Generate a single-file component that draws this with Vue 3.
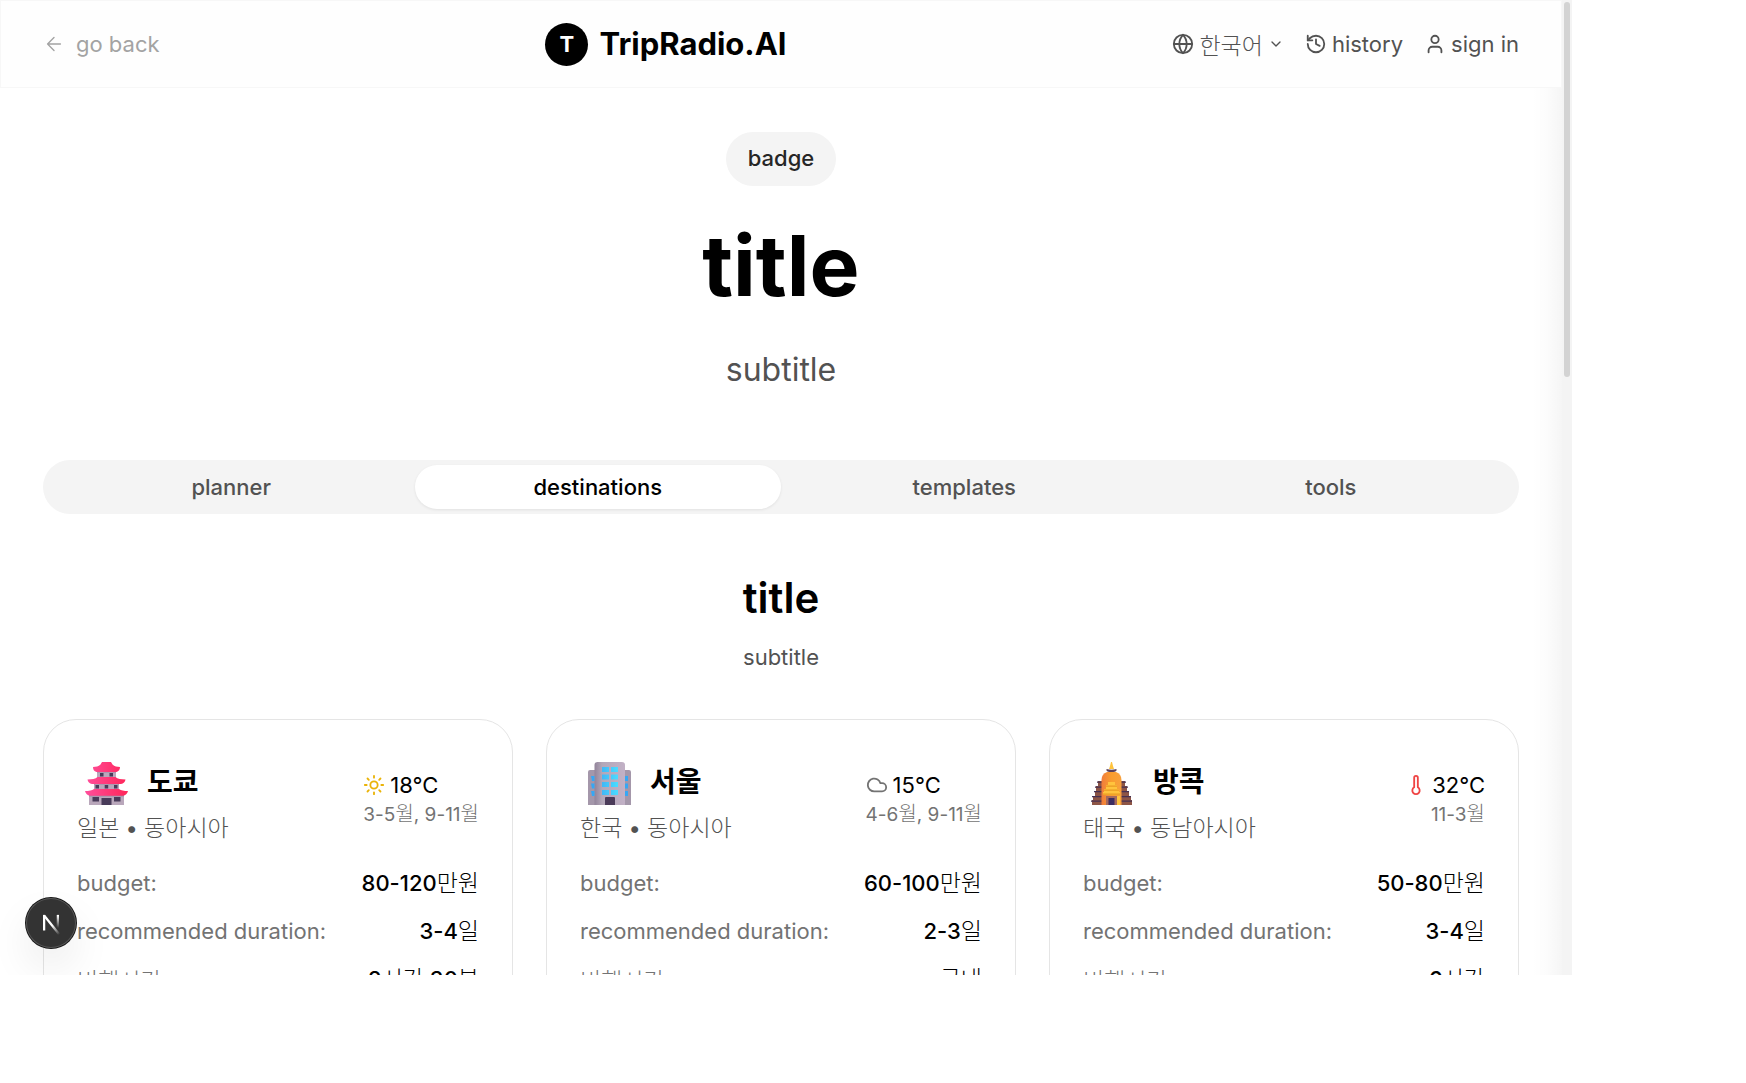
<script setup>
import { ref } from 'vue'

const tabs = ['planner', 'destinations', 'templates', 'tools']
const active = ref('destinations')

const destinations = [
  {
    id: 'tokyo', city: '도쿄', country: '일본', area: '동아시아', weather: 'sun', temp: '18°C',
    season: [['3-5', '월'], [', 9-11', '월']],
    budget: [['80-120', '만원']], days: [['3-4', '일']], flight: [['2', '시간'], [' 30', '분']],
  },
  {
    id: 'seoul', city: '서울', country: '한국', area: '동아시아', weather: 'cloud', temp: '15°C',
    season: [['4-6', '월'], [', 9-11', '월']],
    budget: [['60-100', '만원']], days: [['2-3', '일']], flight: [['', '국내']],
  },
  {
    id: 'bangkok', city: '방콕', country: '태국', area: '동남아시아', weather: 'hot', temp: '32°C',
    season: [['11-3', '월']],
    budget: [['50-80', '만원']], days: [['3-4', '일']], flight: [['6', '시간']],
  },
]
</script>

<template>
  <div class="frame">
    <div class="page">
      <header class="topbar">
        <button class="link back" type="button">
          <svg class="icon thin" viewBox="0 0 24 24"><path d="m12 19-7-7 7-7M19 12H5" /></svg>
          <span>go back</span>
        </button>
        <a class="brand" href="#"><span class="mark">T</span><span>TripRadio.AI</span></a>
        <nav class="actions">
          <button class="link" type="button">
            <svg class="icon" viewBox="0 0 24 24"><circle cx="12" cy="12" r="10" /><path d="M12 2a14.5 14.5 0 0 0 0 20 14.5 14.5 0 0 0 0-20M2 12h20" /></svg>
            <span class="ko">한국어</span>
            <svg class="icon small" viewBox="0 0 24 24"><path d="m6 9 6 6 6-6" /></svg>
          </button>
          <a class="link" href="#">
            <svg class="icon" viewBox="0 0 24 24"><path d="M3 12a9 9 0 1 0 9-9 9.75 9.75 0 0 0-6.74 2.74L3 8" /><path d="M3 3v5h5M12 7v5l4 2" /></svg>
            <span>history</span>
          </a>
          <a class="link" href="#">
            <svg class="icon" viewBox="0 0 24 24"><path d="M19 21v-2a4 4 0 0 0-4-4H9a4 4 0 0 0-4 4v2" /><circle cx="12" cy="7" r="4" /></svg>
            <span>sign in</span>
          </a>
        </nav>
      </header>

      <main class="content">
        <section class="hero">
          <span class="badge">badge</span>
          <h1>title</h1>
          <p>subtitle</p>
        </section>

        <div class="tabs" role="tablist">
          <button
            v-for="tab in tabs" :key="tab" type="button" role="tab"
            :class="{ active: tab === active }" :aria-selected="tab === active" @click="active = tab"
          >{{ tab }}</button>
        </div>

        <section class="intro">
          <h2>title</h2>
          <p>subtitle</p>
        </section>

        <section class="cards">
          <article v-for="d in destinations" :key="d.id" class="card">
            <div class="head">
              <div>
                <div class="name">
                  <svg v-if="d.id === 'tokyo'" class="picture" viewBox="0 0 43 43">
                    <defs><linearGradient id="roof"><stop offset="0" stop-color="#ff4f9c" /><stop offset="1" stop-color="#ff2558" /></linearGradient></defs>
                    <path fill="#b9a7bb" d="M12 9h19v7H12zM9 20h25v8H9zM4 32h35v11H4z" />
                    <path fill="#9c8ba3" d="M12 9h19v1.500H12zM9 21h25v1.500H9zM4 33h35v1.500H4z" />
                    <path fill="url(#roof)" d="M17 0h9l1.500 2.500c2 1.800 4.500 2.500 7.500 2.500 0 2.500-1.200 4.500-3.500 5h-20C9 9.500 8 7.500 8 5c3 0 5.500-.7 7.500-2.500zM12.500 15h18c2 1.800 5.500 2.500 10 2.500-.4 2.700-2 4-4.500 4.500H7c-2.500-.5-4.100-1.800-4.500-4.500 4.500 0 8-.7 10-2.500zM9 27h25c2 1.400 5 2 9 2-.6 2.700-2.500 4.300-5 4.800H5c-2.500-.5-4.400-2.100-5-4.800 4 0 7-.6 9-2z" />
                    <path fill="#483b59" d="M15 11h3.500v3.500H15zM24.500 11H28v3.500h-3.500zM10.500 23H14v3.500h-3.500zM19.700 23h3.500v3.500h-3.500zM29 23h3.500v3.500H29zM7.500 35H14v4.500H7.500zM29 35h6.500v4.500H29zM16.500 36h10v7h-10z" />
                  </svg>
                  <svg v-else-if="d.id === 'seoul'" class="picture" viewBox="0 0 43 43">
                    <defs>
                      <linearGradient id="tower"><stop offset="0" stop-color="#92849a" /><stop offset=".25" stop-color="#b3a7b8" /><stop offset="1" stop-color="#c2b1c6" /></linearGradient>
                      <linearGradient id="glass"><stop offset="0" stop-color="#42b7f5" /><stop offset="1" stop-color="#4bdcff" /></linearGradient>
                    </defs>
                    <path fill="#a497aa" d="M0 10q0-2 2-2h7v35H0zM34 8h7q2 0 2 2v33h-9z" />
                    <path fill="url(#tower)" d="M6.500 3q0-3 3-3h24.500q3 0 3 3v40H6.500z" />
                    <path fill="url(#glass)" d="M14 5h7v5h-7zM23 5h7v5h-7zM14 12.500h7v5h-7zM23 12.500h7v5h-7zM14 20h7v5h-7zM23 20h7v5h-7zM14 28h7v5h-7zM23 28h7v5h-7z" />
                    <path fill="#36a7f4" d="M3 14h3.500v5H4zM3 21.500h3.500v5H4zM3 29h3.500v5H4zM37 14h3v5h-3zM37 21.500h3v5h-3zM37 29h3v5h-3z" />
                    <path fill="#4b3b59" d="M17 43v-7q0-1 1-1h8q1 0 1 1v7z" />
                  </svg>
                  <svg v-else class="picture" viewBox="0 0 43 43">
                    <defs><linearGradient id="stupa"><stop offset="0" stop-color="#f07c3c" /><stop offset=".5" stop-color="#f99d2e" /><stop offset="1" stop-color="#f8a13d" /></linearGradient></defs>
                    <path fill="#8d5546" d="M7 19h27v5h2v5h2v5h2v4h1v5H1v-5h1v-4h2v-5h1v-5h2z" />
                    <path fill="#453052" d="M6 19.500h29v1.300H6zM4 24.500h33v1.300H4zM3 29h35v1.300H3zM1 34h39v1.300H1zM0 38.500h41v1.300H0z" />
                    <path fill="url(#stupa)" d="M10.500 43V18q0-6 5.500-8h9q5.500 2 5.500 8v25z" />
                    <path fill="#ffc33d" d="M19 4 20 0h1l1 4 1 3h-5zM17 20h7v3h2v4h2v3h1v3H12v-3h1v-3h2v-4h2zM26 34h3v9h-3z" />
                    <path fill="#e99a22" d="M15 23.500h11v1.300H15zM13 27.500h15v1.300H13zM12 31.500h17v1.300H12z" />
                    <path fill="#59405b" d="M15.500 7q5 1.500 10 0v1.500q-1 1.500-5 1.500t-5-1.500z" />
                    <path fill="#a5695c" d="M15 34h11v9H15z" /><path fill="#3c2d61" d="M17.500 36h6v7h-6z" />
                  </svg>
                  <h3>{{ d.city }}</h3>
                </div>
                <p class="region"><span class="ko">{{ d.country }}</span> • <span class="ko">{{ d.area }}</span></p>
              </div>
              <div class="climate">
                <div class="temp">
                  <svg class="icon" :class="d.weather" viewBox="0 0 24 24">
                    <template v-if="d.weather === 'sun'"><circle cx="12" cy="12" r="4" /><path d="M12 2v2M12 20v2M4.930 4.930l1.410 1.410M17.660 17.660l1.410 1.410M2 12h2M20 12h2M6.340 17.660l-1.410 1.410M19.070 4.930l-1.410 1.410" /></template>
                    <path v-else-if="d.weather === 'cloud'" d="M17.500 19H9a7 7 0 1 1 6.710-9h1.790a4.500 4.500 0 1 1 0 9Z" />
                    <path v-else d="M14 4v10.540a4 4 0 1 1-4 0V4a2 2 0 0 1 4 0Z" />
                  </svg>
                  <span>{{ d.temp }}</span>
                </div>
                <p class="season"><template v-for="(s, i) in d.season" :key="i">{{ s[0] }}<span class="ko">{{ s[1] }}</span></template></p>
              </div>
            </div>
            <dl>
              <div><dt>budget:</dt><dd><template v-for="(s, i) in d.budget" :key="i">{{ s[0] }}<span class="ko">{{ s[1] }}</span></template></dd></div>
              <div><dt>recommended duration:</dt><dd><template v-for="(s, i) in d.days" :key="i">{{ s[0] }}<span class="ko">{{ s[1] }}</span></template></dd></div>
              <div><dt class="ko">비행시간</dt><dd><template v-for="(s, i) in d.flight" :key="i">{{ s[0] }}<span class="ko">{{ s[1] }}</span></template></dd></div>
            </dl>
          </article>
        </section>
      </main>
      <div class="edge"></div>
    </div>
    <div class="track"><div class="thumb"></div></div>
    <button class="dev" type="button" aria-label="Developer tools">
      <svg viewBox="0 0 40 40">
        <defs>
          <linearGradient id="diag" x1="21" y1="22" x2="27" y2="29" gradientUnits="userSpaceOnUse"><stop stop-color="#fff" /><stop offset="1" stop-color="#fff" stop-opacity="0" /></linearGradient>
          <linearGradient id="stem" x1="0" y1="14" x2="0" y2="24" gradientUnits="userSpaceOnUse"><stop stop-color="#fff" /><stop offset="1" stop-color="#fff" stop-opacity="0" /></linearGradient>
        </defs>
        <path d="M14.500 14 26.500 29" fill="none" stroke="url(#diag)" stroke-width="1.800" />
        <path d="M14.500 13.500V26" stroke="#fff" stroke-width="1.800" />
        <path d="M24.600 13.500h1.800v11h-1.800z" fill="url(#stem)" />
      </svg>
    </button>
  </div>
</template>

<style>
body { margin: 0; background: #fff; }
</style>

<style scoped>
* { box-sizing: border-box; }
h1, h2, h3, p, dl, dd { margin: 0; }
button { border: 0; background: none; padding: 0; font: inherit; color: inherit; cursor: pointer; }
a { color: inherit; text-decoration: none; }

.frame {
  position: relative;
  display: flex;
  width: calc(100vw - 174px);
  height: calc(100vh - 108px);
  overflow: hidden;
  font: 400 22px/32px Inter, "Noto Sans CJK KR", sans-serif;
  color: #000;
  background: #fff;
}
.ko { font-family: "Noto Sans CJK KR", sans-serif; font-size: 23px; font-weight: 300; line-height: 1; }
.page { position: relative; flex: 1; min-width: 0; overflow: hidden; }

.topbar {
  position: relative;
  z-index: 2;
  display: flex;
  align-items: center;
  justify-content: space-between;
  height: 88px;
  padding: 0 42px;
  border: 1px solid #f7f7f7;
  background: #fefefe;
  color: #525252;
}
.link { display: flex; align-items: center; gap: 5px; }
.back { gap: 11px; color: #a3a3a3; }
.actions { display: flex; gap: 21px; }
.icon { flex: none; width: 22px; height: 22px; fill: none; stroke: currentColor; stroke-width: 2; stroke-linecap: round; stroke-linejoin: round; }
.icon.thin { stroke-width: 1.5; }
.icon.small { width: 16px; height: 16px; }
.brand { display: flex; align-items: center; gap: 11px; font-size: 31px; font-weight: 700; color: #000; }
.mark { display: grid; place-items: center; width: 43px; height: 43px; border-radius: 50%; background: #000; color: #fff; font-size: 22px; }

.content { padding: 44px 43px 0; }
.hero { display: flex; flex-direction: column; align-items: center; gap: 37px; }
.badge { padding: 10px 22px 12px; border-radius: 27px; background: #f4f4f4; color: #262626; font-weight: 500; }
.hero h1 { font-size: 84px; line-height: 86px; font-weight: 700; }
.hero p { font-size: 32px; line-height: 48px; color: #525252; }

.tabs { display: grid; grid-template-columns: repeat(4, 1fr); margin-top: 66px; padding: 5px; border-radius: 27px; background: #f4f4f4; }
.tabs button { height: 44px; border-radius: 22px; font-weight: 500; color: #525252; }
.tabs .active { background: #fff; color: #000; box-shadow: 0 1px 3px rgba(0, 0, 0, .08); }

.intro { display: flex; flex-direction: column; align-items: center; gap: 19px; margin: 60px 0 46px; }
.intro h2 { font-size: 42px; line-height: 48px; font-weight: 600; }
.intro p { color: #525252; }

.cards { display: grid; grid-template-columns: repeat(3, 1fr); gap: 33px; }
.card { padding: 33px; border: 1px solid #e5e5e5; border-radius: 33px; background: #fff; }
.head { display: flex; align-items: center; justify-content: space-between; margin-bottom: 24px; }
.name { display: flex; align-items: center; gap: 11px; height: 60px; }
.picture { width: 59px; height: 43px; }
.name h3 { padding-bottom: 6px; font: 700 28px/40px "Noto Sans CJK KR", sans-serif; }
.region { line-height: 30px; color: #525252; }
.climate { padding-top: 4px; }
.temp { display: flex; align-items: center; gap: 5px; line-height: 30px; }
.season { font-size: 19px; line-height: 30px; text-align: right; color: #737373; }
.season .ko { font-size: 20px; }
.sun { stroke: #eab308; }
.cloud { stroke: #737373; }
.hot { stroke: #ef4444; }
dl { display: flex; flex-direction: column; gap: 16px; }
dl > div { display: flex; justify-content: space-between; height: 32px; }
dt { color: #737373; }
dt.ko { line-height: 32px; }
dd { font-weight: 500; }

.edge { position: absolute; z-index: 1; top: 0; bottom: 0; right: 0; width: 30px; background: linear-gradient(to right, rgba(0, 0, 0, 0), rgba(0, 0, 0, .01) 50%, rgba(0, 0, 0, .04)); }
.track { flex: none; width: 10px; padding: 2px; background: #f4f4f4; }
.thumb { width: 6px; height: 375px; border-radius: 3px; background: #d3d3d3; }

.dev {
  position: absolute;
  z-index: 3;
  left: 26px;
  bottom: 27px;
  width: 50px;
  height: 50px;
  border-radius: 50%;
  background: #333;
  box-shadow: 0 0 0 1px #171717, inset 0 0 0 1px #555, 0 20px 40px rgba(0, 0, 0, .08);
}
.dev svg { display: block; width: 50px; height: 50px; }
</style>
